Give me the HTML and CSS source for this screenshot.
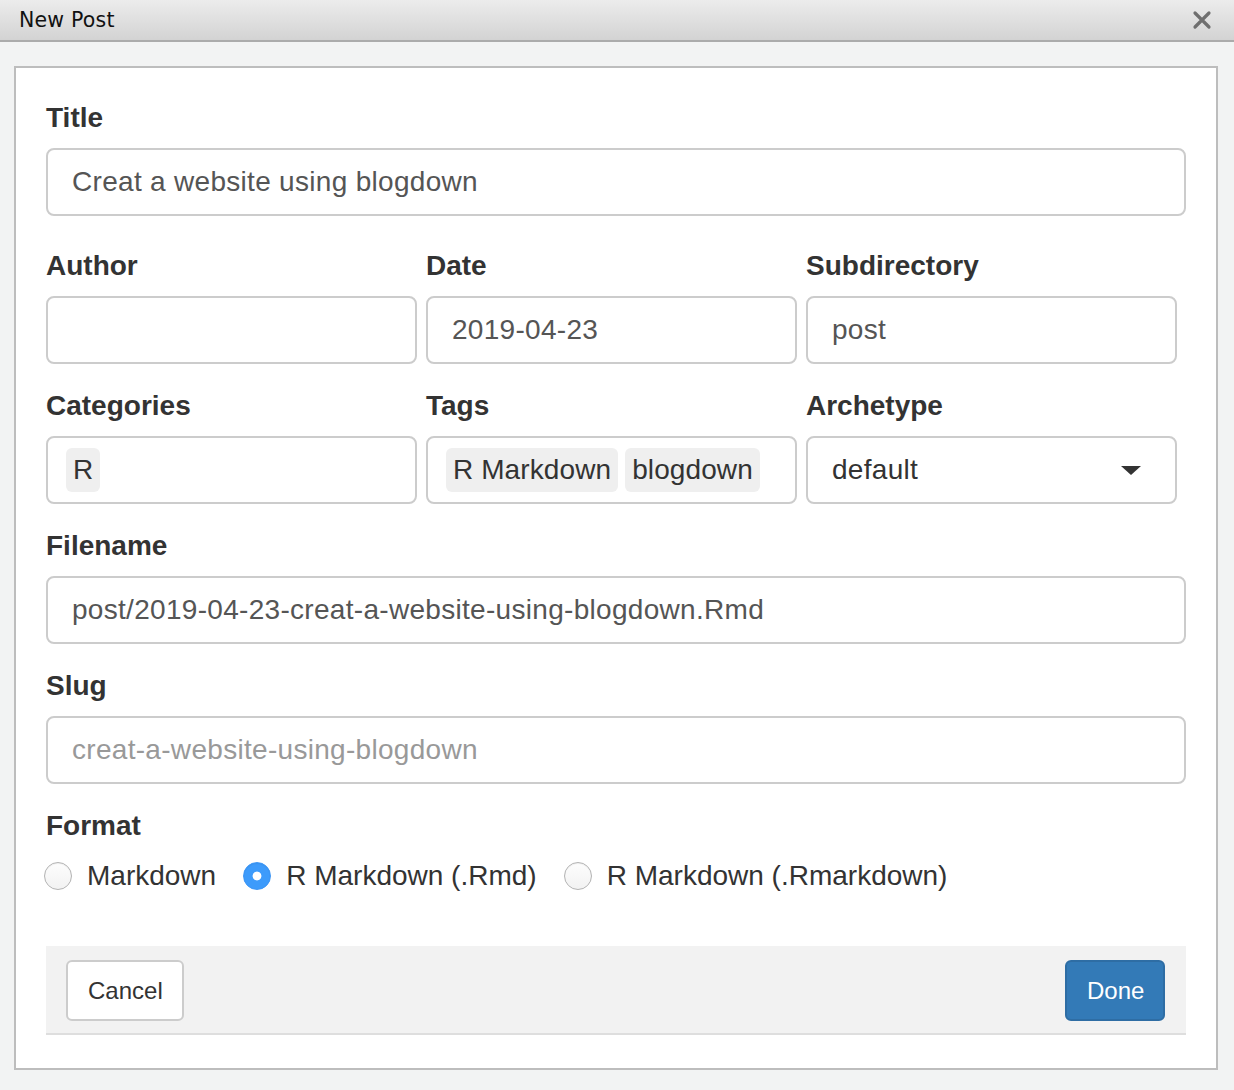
FILE: index.html
```html
<!DOCTYPE html>
<html lang="en">
<head>
<meta charset="utf-8">
<title>New Post</title>
<link rel="stylesheet" href="styles.css">
</head>
<body>
<header class="titlebar">
  <span class="titlebar-text">New Post</span>
  <svg class="close" width="20" height="20" viewBox="0 0 20 20" aria-hidden="true">
    <path d="M3 3 L17 17 M17 3 L3 17" stroke="#6f6f6f" stroke-width="3.2" stroke-linecap="round"/>
  </svg>
</header>
<main class="panel">
  <div class="field field-wide">
    <label class="label">Title</label>
    <input class="control" type="text" value="Creat a website using blogdown">
  </div>
  <div class="grid">
    <div class="field">
      <label class="label">Author</label>
      <input class="control" type="text" value="">
    </div>
    <div class="field">
      <label class="label">Date</label>
      <input class="control" type="text" value="2019-04-23">
    </div>
    <div class="field">
      <label class="label">Subdirectory</label>
      <input class="control" type="text" value="post">
    </div>
    <div class="field">
      <label class="label">Categories</label>
      <div class="control chips">
        <span class="chip">R</span>
      </div>
    </div>
    <div class="field">
      <label class="label">Tags</label>
      <div class="control chips">
        <span class="chip">R Markdown</span>
        <span class="chip">blogdown</span>
      </div>
    </div>
    <div class="field">
      <label class="label">Archetype</label>
      <div class="control select">
        <span class="select-value">default</span>
        <svg class="caret" width="20" height="9" viewBox="0 0 20 9" aria-hidden="true">
          <path d="M0 0 H20 L10 9 Z" fill="#333"/>
        </svg>
      </div>
    </div>
  </div>
  <div class="field">
    <label class="label">Filename</label>
    <input class="control" type="text" value="post/2019-04-23-creat-a-website-using-blogdown.Rmd">
  </div>
  <div class="field">
    <label class="label">Slug</label>
    <input class="control" type="text" placeholder="creat-a-website-using-blogdown">
  </div>
  <div class="field field-format">
    <label class="label">Format</label>
    <div class="radios">
      <label class="radio-option"><input class="radio" type="radio" name="fmt"><span>Markdown</span></label>
      <label class="radio-option"><input class="radio" type="radio" name="fmt" checked><span>R Markdown (.Rmd)</span></label>
      <label class="radio-option"><input class="radio" type="radio" name="fmt"><span>R Markdown (.Rmarkdown)</span></label>
    </div>
  </div>
  <footer class="footer">
    <button class="btn btn-default" type="button">Cancel</button>
    <button class="btn btn-primary" type="button">Done</button>
  </footer>
</main>
</body>
</html>
```

FILE: styles.css
```css
html, body {
  margin: 0;
  padding: 0;
}
body {
  background: #f2f3f3;
  font-family: "Liberation Sans", Arial, sans-serif;
  color: #333;
  width: 1234px;
  height: 1090px;
  overflow: hidden;
}
.titlebar {
  height: 40px;
  border-bottom: 2px solid #ababab;
  background: linear-gradient(#ececec, #d3d3d3);
  display: flex;
  align-items: center;
  justify-content: space-between;
  padding: 0 22px 0 19px;
}
.titlebar-text {
  font-family: "DejaVu Sans", sans-serif;
  font-size: 20.5px;
  color: #111;
  letter-spacing: 0.2px;
}
.close {
  display: block;
}
.panel {
  margin: 24px 16px 0 14px;
  background: #fff;
  border: 2px solid #bdbdbd;
  padding: 30px 30px 35px 30px;
  height: 935px;
  box-sizing: content-box;
}
.field {
  display: flex;
  flex-direction: column;
  margin-bottom: 22px;
}
.field-wide {
  margin-bottom: 30px;
}
.label {
  font-weight: bold;
  font-size: 28px;
  line-height: 40px;
  margin-bottom: 10px;
  color: #333;
}
.control {
  box-sizing: border-box;
  height: 68px;
  width: 100%;
  border: 2px solid #ccc;
  border-radius: 8px;
  padding: 0 24px;
  font-family: "Liberation Sans", Arial, sans-serif;
  font-size: 28px;
  letter-spacing: 0.3px;
  color: #555;
  background: #fff;
  margin: 0;
  outline: none;
}
.control::placeholder {
  color: #999;
}
.grid {
  display: grid;
  grid-template-columns: repeat(3, 1fr);
}
.grid .field .control {
  width: calc(100% - 9px);
}
.chips {
  display: flex;
  align-items: center;
  gap: 7px;
  padding: 0 18px;
  letter-spacing: 0.1px;
}
.chip {
  background: #efefef;
  border-radius: 6px;
  height: 44px;
  line-height: 44px;
  padding: 0 7px;
  color: #333;
  font-size: 28px;
}
.select {
  display: flex;
  align-items: center;
  justify-content: space-between;
  padding: 0 34px 0 24px;
}
.select-value {
  color: #333;
}
.caret {
  display: block;
}
.field-format {
  margin-bottom: 50px;
}
.radios {
  display: flex;
  align-items: center;
  height: 40px;
  gap: 27px;
  margin-left: -2px;
}
.radio-option {
  display: flex;
  align-items: center;
  gap: 15px;
  font-size: 28px;
  color: #333;
}
.radio {
  appearance: none;
  -webkit-appearance: none;
  margin: 0;
  width: 28px;
  height: 28px;
  border-radius: 50%;
  border: 1px solid #b3b3b3;
  background: linear-gradient(#fdfdfd, #f2f2f2);
  box-sizing: border-box;
  box-shadow: inset 0 1px 1px rgba(0,0,0,0.06);
}
.radio:checked {
  border-color: #3b95f5;
  background: radial-gradient(circle, #fff 0 4px, #3d9bfb 4.8px);
}
.footer {
  background: #f2f2f2;
  border-bottom: 2px solid #dedede;
  display: flex;
  justify-content: space-between;
  align-items: flex-start;
  padding: 14px 21px 12px 20px;
}
.btn {
  font-family: "Liberation Sans", Arial, sans-serif;
  font-size: 24px;
  height: 61px;
  border-radius: 6px;
  border: 2px solid #ccc;
  padding: 0 20px;
  margin: 0;
  cursor: pointer;
}
.btn-default {
  background: #fff;
  color: #333;
  width: 118px;
}
.btn-primary {
  background: #337ab7;
  border-color: #2e6da4;
  color: #fff;
  width: 100px;
}
```
